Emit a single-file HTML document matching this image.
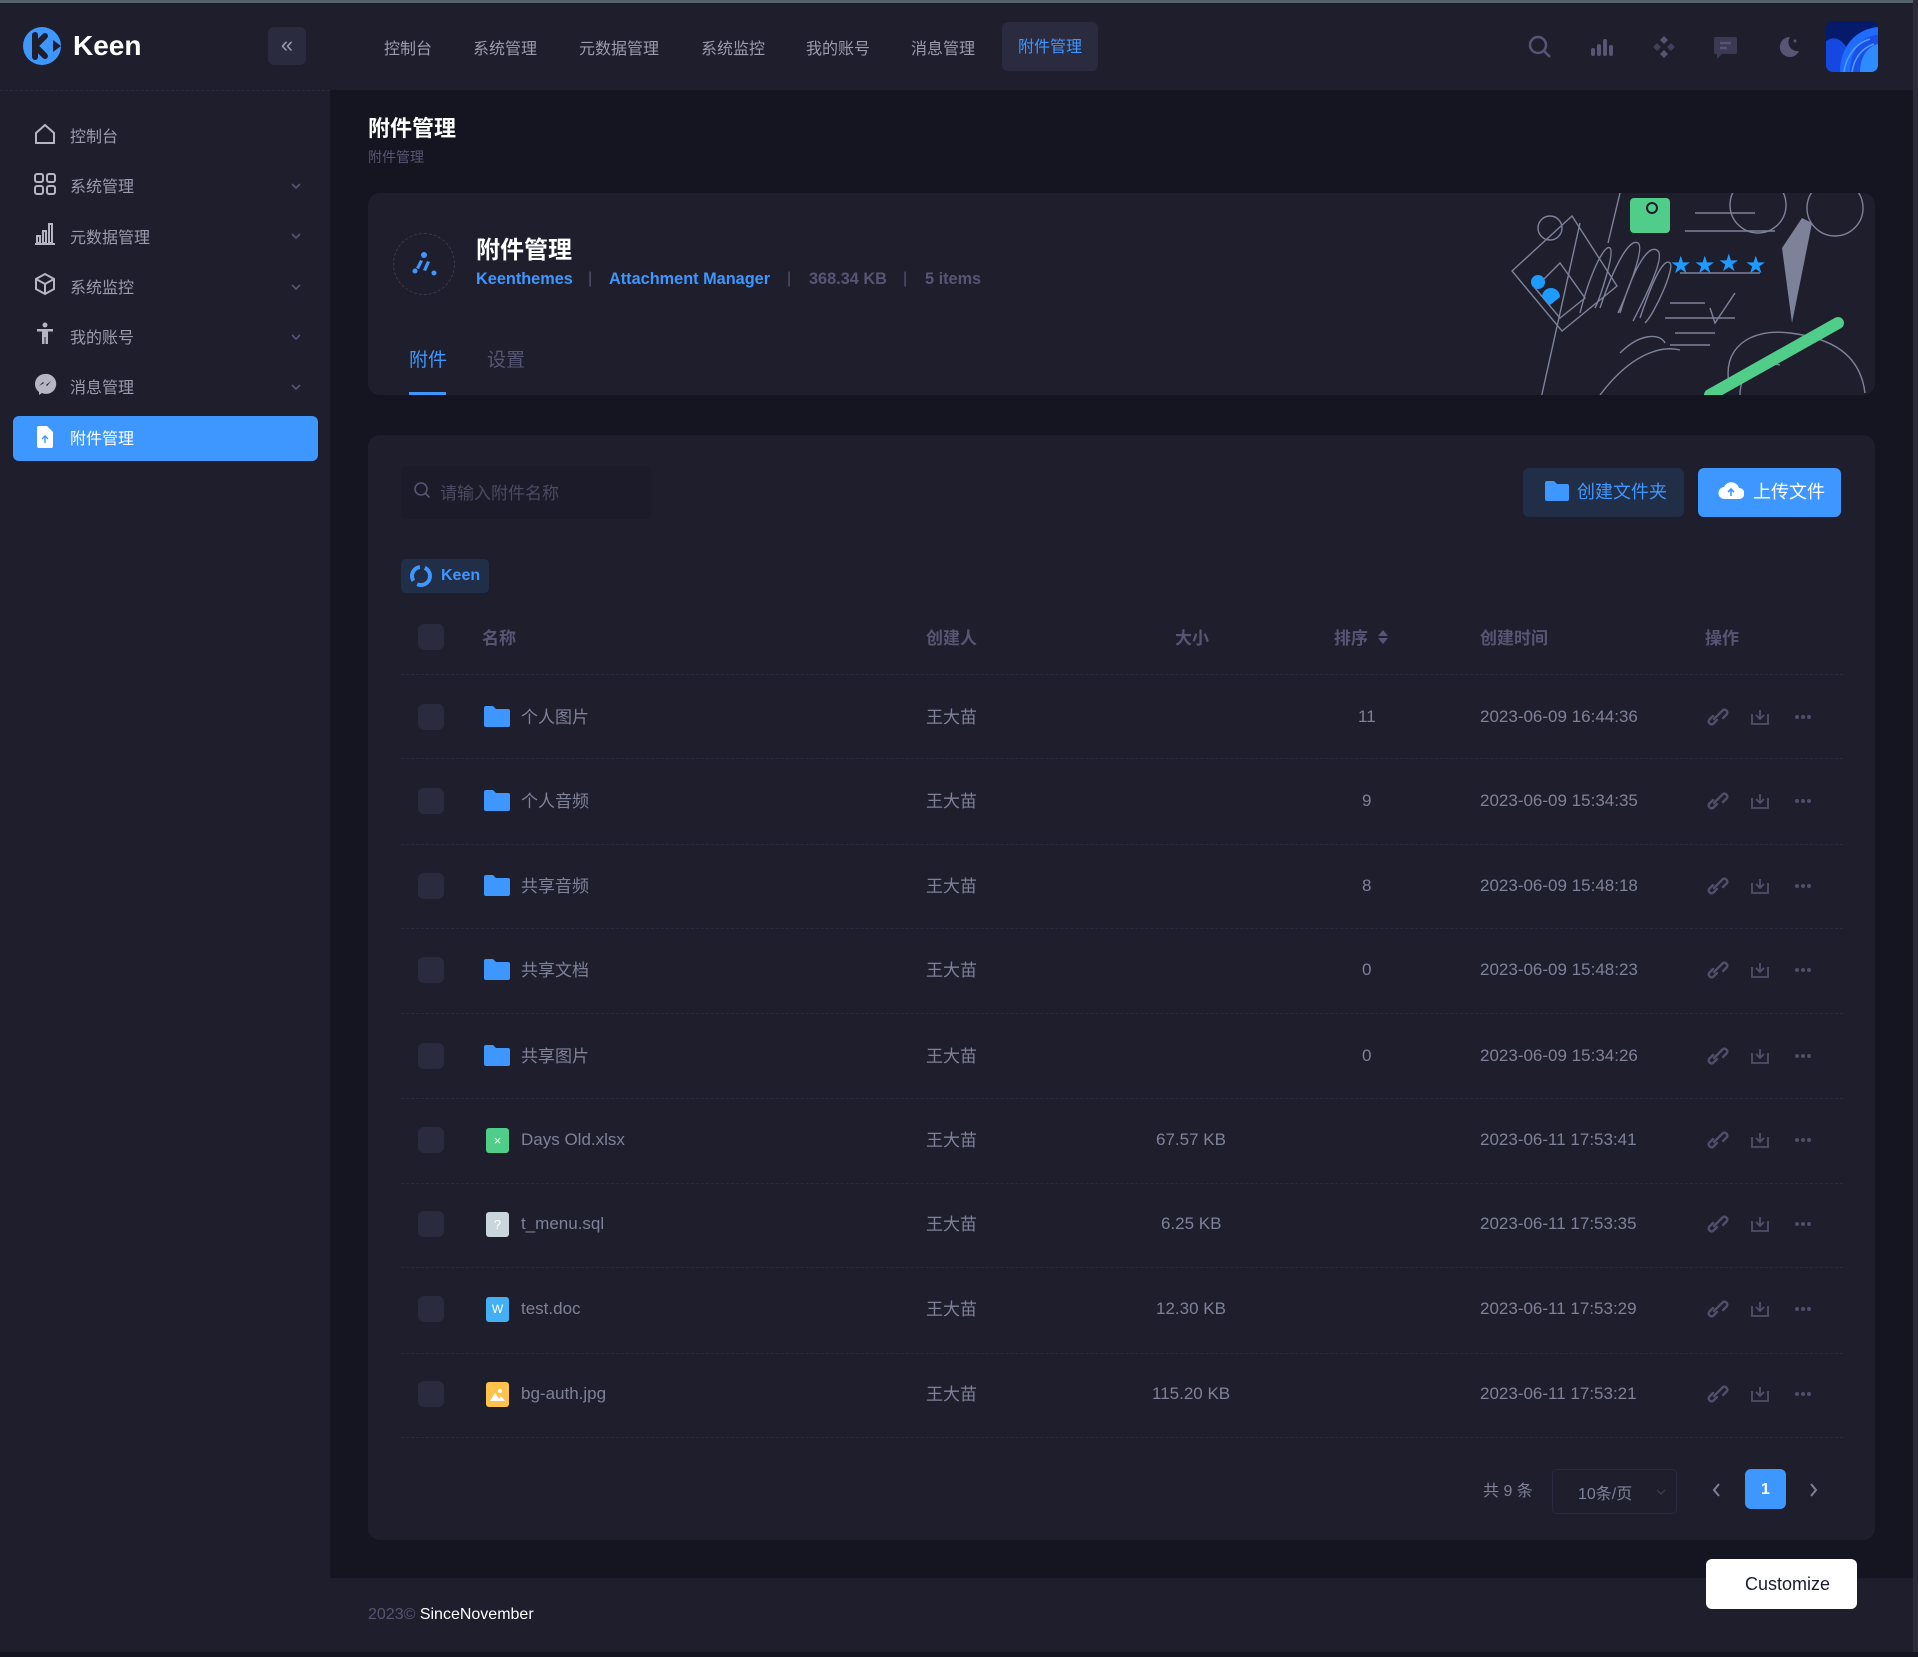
<!DOCTYPE html>
<html><head><meta charset="utf-8">
<style>
*{margin:0;padding:0;box-sizing:border-box}
body{width:1918px;height:1657px;background:#151521;font-family:"Liberation Sans","Noto Sans CJK SC",sans-serif;position:relative;overflow:hidden;color:#92929f}
.a{position:absolute}
.hdr{left:0;top:0;width:1918px;height:90px;background:#1e1e2d;border-top:3px solid #56626b}
.side{left:0;top:90px;width:330px;height:1567px;background:#1e1e2d;border-top:1px dashed #2b2b40}
.nav{top:35px;font-size:16px;color:#9a9cae}
.si{left:70px;font-size:16px;color:#9a9cae;margin-top:-4px}
.ico{left:33px;width:24px;height:24px}
.chev{left:290px;width:12px;height:12px}
.card{background:#1e1e2d;border-radius:12px}
.row{left:401px;width:1442px;height:1px;border-top:1px dashed #2b2b40}
.cb{left:418px;width:26px;height:26px;background:#2b2b40;border-radius:6px}
.t{font-size:17px;color:#7e8299}
.c{margin-top:-3px}
.l{margin-top:1px}
.th{font-size:17px;color:#565674;font-weight:bold;margin-top:-4px}
</style></head><body>
<div class="a hdr"></div>
<svg class="a" style="left:23px;top:27px" width="38" height="38" viewBox="0 0 38 38"><circle cx="19" cy="19" r="19" fill="#3e97ff"/><path d="M12 8v22M12 19l10-10M12 19l10 10" stroke="#1e1e2d" stroke-width="6" stroke-linecap="round"/><path d="M38 19l-8-6v12z" fill="#1e1e2d"/></svg>
<div class="a" style="left:73px;top:30px;font-size:28px;font-weight:bold;color:#fff">Keen</div>
<div class="a" style="left:268px;top:27px;width:38px;height:38px;background:#2b2b40;border-radius:6px;color:#9a9cae;font-size:22px;text-align:center;line-height:36px">«</div>
<div class="a nav" style="left:384px">控制台</div>
<div class="a nav" style="left:473px">系统管理</div>
<div class="a nav" style="left:579px">元数据管理</div>
<div class="a nav" style="left:701px">系统监控</div>
<div class="a nav" style="left:806px">我的账号</div>
<div class="a nav" style="left:911px">消息管理</div>
<div class="a" style="left:1002px;top:22px;width:96px;height:49px;background:#2b2b40;border-radius:6px;color:#3e97ff;font-size:16px;text-align:center;line-height:51px">附件管理</div>
<svg class="a" style="left:1528px;top:35px" width="24" height="24" viewBox="0 0 24 24"><circle cx="10" cy="10" r="8" fill="none" stroke="#565674" stroke-width="2.5"/><path d="M16 16l6 6" stroke="#565674" stroke-width="2.5"/></svg>
<svg class="a" style="left:1590px;top:38px" width="24" height="20" viewBox="0 0 24 20"><rect x="1" y="10" width="4" height="8" rx="2" fill="#565674"/><rect x="7" y="6" width="4" height="12" rx="2" fill="#565674"/><rect x="13" y="1" width="4" height="17" rx="2" fill="#565674"/><rect x="19" y="7" width="4" height="11" rx="2" fill="#565674"/></svg>
<svg class="a" style="left:1652px;top:35px" width="24" height="24" viewBox="0 0 24 24"><g fill="#565674"><path d="M12 1l4 4-4 4-4-4z"/><path d="M12 15l4 4-4 4-4-4z"/><path d="M5 8l4 4-4 4-4-4z" opacity=".6"/><path d="M19 8l4 4-4 4-4-4z" opacity=".6"/></g></svg>
<svg class="a" style="left:1713px;top:36px" width="25" height="24" viewBox="0 0 25 24"><path d="M3 1h19a2 2 0 012 2v13a2 2 0 01-2 2H9l-5 5v-5H3a2 2 0 01-2-2V3a2 2 0 012-2z" fill="#3a3a52"/><path d="M7 7h11M7 12h7" stroke="#565674" stroke-width="2.5"/></svg>
<svg class="a" style="left:1778px;top:36px" width="22" height="22" viewBox="0 0 22 22"><path d="M12 1a10 10 0 109 14A9 9 0 0112 1z" fill="#565674"/><circle cx="17" cy="5" r="1.5" fill="#565674"/></svg>
<svg class="a" style="left:1826px;top:21px;border-radius:7px" width="52" height="51" viewBox="0 0 52 51"><rect width="52" height="51" fill="#061a6b"/><path d="M0 20C15 10 25 30 30 51H0z" fill="#1448e0"/><path d="M14 51C14 25 30 8 52 6v45z" fill="#1f6cff"/><path d="M24 51C24 30 36 14 52 14v37z" fill="#1a4fe8"/><path d="M34 51c0-15 8-26 18-28v28z" fill="#2f8cff"/><path d="M18 51C20 35 30 22 44 18M26 51c2-14 10-24 22-28" stroke="#4aa0ff" stroke-width="1.5" fill="none"/></svg>

<div class="a side"></div>
<svg class="a ico" style="top:122px" viewBox="0 0 24 24"><path d="M3 11L12 3l9 8v10H3z" fill="none" stroke="#b5b5c3" stroke-width="2"/></svg>
<div class="a si" style="top:127px">控制台</div>
<svg class="a ico" style="top:172px" viewBox="0 0 24 24"><g fill="none" stroke="#b5b5c3" stroke-width="2"><rect x="2" y="2" width="8" height="8" rx="2"/><rect x="14" y="2" width="8" height="8" rx="2"/><rect x="2" y="14" width="8" height="8" rx="2"/><rect x="14" y="14" width="8" height="8" rx="2"/></g></svg>
<div class="a si" style="top:177px">系统管理</div>
<svg class="a ico" style="top:222px" viewBox="0 0 24 24"><g fill="none" stroke="#b5b5c3" stroke-width="2"><path d="M2 22h20"/><rect x="4" y="14" width="3" height="7"/><rect x="10" y="9" width="3" height="12"/><rect x="16" y="2" width="3" height="19"/></g></svg>
<div class="a si" style="top:228px">元数据管理</div>
<svg class="a ico" style="top:272px" viewBox="0 0 24 24"><g fill="none" stroke="#b5b5c3" stroke-width="2"><path d="M12 2l9 5v10l-9 5-9-5V7z"/><path d="M3 7l9 5 9-5M12 12v10"/></g></svg>
<div class="a si" style="top:278px">系统监控</div>
<svg class="a ico" style="top:322px" viewBox="0 0 24 24"><g fill="#b5b5c3"><circle cx="12" cy="3" r="2.5"/><path d="M4 7h16v2.5h-5V22h-2.5v-7h-1v7H9V9.5H4z"/></g></svg>
<div class="a si" style="top:328px">我的账号</div>
<svg class="a ico" style="top:372px" viewBox="0 0 24 24"><path d="M12 2a10 10 0 00-6 18v3l3-2a10 10 0 103-19z" fill="#b5b5c3"/><path d="M6 14l4-4 3 3 5-4-4 5-3-3z" fill="#1e1e2d"/></svg>
<div class="a si" style="top:378px">消息管理</div>
<svg class="a chev" style="top:180px" viewBox="0 0 12 12"><path d="M2 4l4 4 4-4" fill="none" stroke="#565674" stroke-width="1.6"/></svg>
<svg class="a chev" style="top:230px" viewBox="0 0 12 12"><path d="M2 4l4 4 4-4" fill="none" stroke="#565674" stroke-width="1.6"/></svg>
<svg class="a chev" style="top:281px" viewBox="0 0 12 12"><path d="M2 4l4 4 4-4" fill="none" stroke="#565674" stroke-width="1.6"/></svg>
<svg class="a chev" style="top:331px" viewBox="0 0 12 12"><path d="M2 4l4 4 4-4" fill="none" stroke="#565674" stroke-width="1.6"/></svg>
<svg class="a chev" style="top:381px" viewBox="0 0 12 12"><path d="M2 4l4 4 4-4" fill="none" stroke="#565674" stroke-width="1.6"/></svg>
<div class="a" style="left:13px;top:416px;width:305px;height:45px;background:#3e97ff;border-radius:6px"></div>
<svg class="a" style="left:37px;top:426px" width="16" height="22" viewBox="0 0 16 22"><path d="M2 0h8l6 6v14a2 2 0 01-2 2H2a2 2 0 01-2-2V2a2 2 0 012-2z" fill="#fff"/><path d="M8 17v-7M5 13l3-3 3 3" fill="none" stroke="#3e97ff" stroke-width="1.4"/></svg>
<div class="a" style="left:70px;top:425px;font-size:16px;color:#fff">附件管理</div>

<div class="a" style="left:368px;top:111px;font-size:22px;font-weight:bold;color:#fff">附件管理</div>
<div class="a" style="left:368px;top:147px;font-size:14px;color:#565674">附件管理</div>

<div class="a card" style="left:368px;top:193px;width:1507px;height:202px"></div>
<div class="a" style="left:393px;top:233px;width:62px;height:62px;border:1.5px dashed #3a3a52;border-radius:50%"></div>
<svg class="a" style="left:410px;top:252px" width="30" height="26" viewBox="0 0 30 26"><g fill="#3e97ff"><circle cx="14" cy="3" r="3"/><circle cx="5" cy="19" r="2.5"/><circle cx="24" cy="21" r="2.5"/><path d="M10 8l3 1-4 8-3-1z"/><path d="M17 9l3 1-4 9-3-1z"/></g></svg>
<div class="a" style="left:476px;top:230px;font-size:24px;font-weight:bold;color:#fff">附件管理</div>
<div class="a" style="left:476px;top:270px;font-size:16.3px;font-weight:bold;color:#3e97ff">Keenthemes</div>
<div class="a" style="left:588px;top:270px;font-size:16px;color:#565674">|</div>
<div class="a" style="left:609px;top:270px;font-size:16.3px;font-weight:bold;color:#3e97ff">Attachment Manager</div>
<div class="a" style="left:787px;top:270px;font-size:16px;color:#565674">|</div>
<div class="a" style="left:809px;top:270px;font-size:16.3px;font-weight:bold;color:#565674">368.34 KB</div>
<div class="a" style="left:903px;top:270px;font-size:16px;color:#565674">|</div>
<div class="a" style="left:925px;top:270px;font-size:16.3px;font-weight:bold;color:#565674">5 items</div>
<div class="a" style="left:409px;top:345px;font-size:19px;color:#3e97ff">附件</div>
<div class="a" style="left:487px;top:345px;font-size:19px;color:#565674">设置</div>
<div class="a" style="left:409px;top:392px;width:37px;height:3px;background:#3e97ff"></div>
<svg class="a" style="left:1500px;top:193px" width="375" height="202" viewBox="0 0 375 202" fill="none" stroke="#7e8299" stroke-width="1.4">
<path d="M12 78l60-55 45 70-55 45z"/><circle cx="50" cy="35" r="12"/><path d="M35 95l25-25 25 35-25 20z"/>
<path d="M40 210l40-180M120 0l-12 50"/>
<path d="M80 120c10-40 25-70 30-65s-10 50-15 60M100 115c15-45 30-70 38-65s-15 60-20 70M120 120c15-50 30-70 38-62s-20 60-25 70M140 125c15-45 25-60 30-55s-15 50-25 60"/>
<path d="M120 160c20-20 40-20 45-10M100 202c30-40 60-50 80-45"/>
<path d="M195 20h60M185 38h90M180 80h80M170 110h35M165 125h70M175 140h40M170 152h40M235 100l-20 30-5-15"/>
<circle cx="258" cy="12" r="28"/><circle cx="335" cy="15" r="28"/>
<path d="M230 195c-10-40 20-60 60-55s70 20 75 60"/><path d="M240 202c0-25 20-35 40-30"/>
<rect x="130" y="5" width="40" height="35" fill="#50cd89" stroke="none" rx="4"/><circle cx="152" cy="15" r="6" fill="#1e1e2d" stroke="none"/><circle cx="152" cy="15" r="4" fill="#50cd89" stroke="none"/>
<path d="M282 55l20-30 10 5-20 100" fill="#7e8299" stroke="none"/>
<path d="M210 202l128-72" stroke="#50cd89" stroke-width="12" stroke-linecap="round"/>
<circle cx="38" cy="89" r="7" fill="#1e9bff" stroke="none"/><path d="M42 104a9 9 0 0118 0l-10 8z" fill="#1e9bff" stroke="none"/>
<g fill="#1e9bff" stroke="none" font-size="24" font-family="DejaVu Sans"><text x="170" y="80">★</text><text x="194" y="80">★</text><text x="218" y="78">★</text><text x="245" y="80">★</text></g>
</svg>

<div class="a card" style="left:368px;top:435px;width:1507px;height:1105px"></div>
<div class="a" style="left:401px;top:466px;width:250px;height:53px;background:#1b1b29;border-radius:6px"></div>
<svg class="a" style="left:413px;top:481px" width="18" height="18" viewBox="0 0 18 18"><circle cx="8" cy="8" r="6" fill="none" stroke="#565674" stroke-width="1.6"/><path d="M12.5 12.5l4 4" stroke="#565674" stroke-width="1.6"/></svg>
<div class="a" style="left:440px;top:479px;font-size:17px;color:#4b4b63">请输入附件名称</div>
<div class="a" style="left:1523px;top:468px;width:161px;height:49px;background:#212e48;border-radius:6px"></div>
<svg class="a" style="left:1545px;top:480px" width="24" height="21" viewBox="0 0 24 21"><path d="M0 3a2 2 0 012-2h7l3 3h10a2 2 0 012 2v13a2 2 0 01-2 2H2a2 2 0 01-2-2z" fill="#3e97ff"/></svg>
<div class="a" style="left:1577px;top:478px;font-size:18px;color:#3e97ff">创建文件夹</div>
<div class="a" style="left:1698px;top:468px;width:143px;height:49px;background:#3e97ff;border-radius:6px"></div>
<svg class="a" style="left:1718px;top:480px" width="26" height="20" viewBox="0 0 26 20"><path d="M7 19a6 6 0 01-1-12 8 8 0 0115 1 5.5 5.5 0 010 11z" fill="#fff"/><path d="M13 16V9M10 12l3-3 3 3" stroke="#3e97ff" stroke-width="1.6" fill="none"/></svg>
<div class="a" style="left:1753px;top:478px;font-size:18px;color:#fff">上传文件</div>
<div class="a" style="left:401px;top:559px;width:88px;height:34px;background:#212e48;border-radius:5px"></div>
<svg class="a" style="left:410px;top:565px" width="22" height="22" viewBox="0 0 22 22"><circle cx="11" cy="11" r="9" fill="none" stroke="#3e97ff" stroke-width="4" stroke-dasharray="18 5"/></svg>
<div class="a" style="left:441px;top:567px;font-size:16px;font-weight:bold;color:#3e97ff">Keen</div>

<div class="a cb" style="top:624px"></div>
<div class="a th" style="left:482px;top:628px">名称</div>
<div class="a th" style="left:926px;top:628px">创建人</div>
<div class="a th" style="left:1175px;top:628px">大小</div>
<div class="a th" style="left:1334px;top:628px">排序</div>
<svg class="a" style="left:1377px;top:629px" width="12" height="16" viewBox="0 0 12 16"><path d="M6 1l5 6H1zM6 15l5-6H1z" fill="#565674"/></svg>
<div class="a th" style="left:1480px;top:628px">创建时间</div>
<div class="a th" style="left:1705px;top:628px">操作</div>
<div class="a row" style="top:674px"></div>
<div class="a row" style="top:758px"></div>
<div class="a row" style="top:844px"></div>
<div class="a row" style="top:928px"></div>
<div class="a row" style="top:1013px"></div>
<div class="a row" style="top:1098px"></div>
<div class="a row" style="top:1183px"></div>
<div class="a row" style="top:1267px"></div>
<div class="a row" style="top:1353px"></div>
<div class="a row" style="top:1437px"></div>

<div class="a cb" style="top:704px"></div><svg class="a" style="left:484px;top:705px" width="26" height="22" viewBox="0 0 26 22"><path d="M0 3a2 2 0 012-2h7l3 3h12a2 2 0 012 2v14a2 2 0 01-2 2H2a2 2 0 01-2-2z" fill="#3e97ff"/></svg><div class="a t c" style="left:521px;top:706px">个人图片</div><div class="a t c" style="left:926px;top:706px">王大苗</div><div class="a t l" style="left:1358px;top:706px">11</div><div class="a t l" style="left:1480px;top:706px">2023-06-09 16:44:36</div>
<div class="a cb" style="top:788px"></div><svg class="a" style="left:484px;top:789px" width="26" height="22" viewBox="0 0 26 22"><path d="M0 3a2 2 0 012-2h7l3 3h12a2 2 0 012 2v14a2 2 0 01-2 2H2a2 2 0 01-2-2z" fill="#3e97ff"/></svg><div class="a t c" style="left:521px;top:790px">个人音频</div><div class="a t c" style="left:926px;top:790px">王大苗</div><div class="a t l" style="left:1362px;top:790px">9</div><div class="a t l" style="left:1480px;top:790px">2023-06-09 15:34:35</div>
<div class="a cb" style="top:873px"></div><svg class="a" style="left:484px;top:874px" width="26" height="22" viewBox="0 0 26 22"><path d="M0 3a2 2 0 012-2h7l3 3h12a2 2 0 012 2v14a2 2 0 01-2 2H2a2 2 0 01-2-2z" fill="#3e97ff"/></svg><div class="a t c" style="left:521px;top:875px">共享音频</div><div class="a t c" style="left:926px;top:875px">王大苗</div><div class="a t l" style="left:1362px;top:875px">8</div><div class="a t l" style="left:1480px;top:875px">2023-06-09 15:48:18</div>
<div class="a cb" style="top:957px"></div><svg class="a" style="left:484px;top:958px" width="26" height="22" viewBox="0 0 26 22"><path d="M0 3a2 2 0 012-2h7l3 3h12a2 2 0 012 2v14a2 2 0 01-2 2H2a2 2 0 01-2-2z" fill="#3e97ff"/></svg><div class="a t c" style="left:521px;top:959px">共享文档</div><div class="a t c" style="left:926px;top:959px">王大苗</div><div class="a t l" style="left:1362px;top:959px">0</div><div class="a t l" style="left:1480px;top:959px">2023-06-09 15:48:23</div>
<div class="a cb" style="top:1043px"></div><svg class="a" style="left:484px;top:1044px" width="26" height="22" viewBox="0 0 26 22"><path d="M0 3a2 2 0 012-2h7l3 3h12a2 2 0 012 2v14a2 2 0 01-2 2H2a2 2 0 01-2-2z" fill="#3e97ff"/></svg><div class="a t c" style="left:521px;top:1045px">共享图片</div><div class="a t c" style="left:926px;top:1045px">王大苗</div><div class="a t l" style="left:1362px;top:1045px">0</div><div class="a t l" style="left:1480px;top:1045px">2023-06-09 15:34:26</div>
<div class="a cb" style="top:1127px"></div><div class="a" style="left:486px;top:1128px;width:23px;height:25px;background:#50cd89;border-radius:3px;color:#fff;font-size:13px;text-align:center;line-height:25px">×</div><div class="a t l" style="left:521px;top:1129px">Days Old.xlsx</div><div class="a t c" style="left:926px;top:1129px">王大苗</div><div class="a t l" style="left:1156px;top:1129px">67.57 KB</div><div class="a t l" style="left:1480px;top:1129px">2023-06-11 17:53:41</div>
<div class="a cb" style="top:1211px"></div><div class="a" style="left:486px;top:1212px;width:23px;height:25px;background:#c9d6dc;border-radius:3px;color:#fff;font-size:13px;text-align:center;line-height:25px">?</div><div class="a t l" style="left:521px;top:1213px">t_menu.sql</div><div class="a t c" style="left:926px;top:1213px">王大苗</div><div class="a t l" style="left:1161px;top:1213px">6.25 KB</div><div class="a t l" style="left:1480px;top:1213px">2023-06-11 17:53:35</div>
<div class="a cb" style="top:1296px"></div><div class="a" style="left:486px;top:1297px;width:23px;height:25px;background:#43b0f5;border-radius:3px;color:#fff;font-size:12px;text-align:center;line-height:25px">W</div><div class="a t l" style="left:521px;top:1298px">test.doc</div><div class="a t c" style="left:926px;top:1298px">王大苗</div><div class="a t l" style="left:1156px;top:1298px">12.30 KB</div><div class="a t l" style="left:1480px;top:1298px">2023-06-11 17:53:29</div>
<div class="a cb" style="top:1381px"></div><div class="a" style="left:486px;top:1382px;width:23px;height:25px;background:#ffc34d;border-radius:3px"></div><svg class="a" style="left:489px;top:1388px" width="17" height="14" viewBox="0 0 17 14"><circle cx="11" cy="3" r="2" fill="#fff"/><path d="M1 13l5-8 4 6 2-3 4 5z" fill="#fff"/></svg><div class="a t l" style="left:521px;top:1383px">bg-auth.jpg</div><div class="a t c" style="left:926px;top:1383px">王大苗</div><div class="a t l" style="left:1152px;top:1383px">115.20 KB</div><div class="a t l" style="left:1480px;top:1383px">2023-06-11 17:53:21</div>

<svg class="a" style="left:1700px;top:0" width="130" height="1420" viewBox="0 0 130 1420">
<defs><g id="ac"><path d="M19 8l4-4a3 3 0 014 4l-4 4M17 14l-4 4a3 3 0 01-4-4l4-4M14 13l6-6" fill="none" stroke="#4f4f6a" stroke-width="2.4" stroke-linecap="round"/><path d="M60 4v8M56 9l4 4 4-4M52 8v10h16V8" fill="none" stroke="#4f4f6a" stroke-width="1.8"/><circle cx="97" cy="11" r="2" fill="#4f4f6a"/><circle cx="103" cy="11" r="2" fill="#4f4f6a"/><circle cx="109" cy="11" r="2" fill="#4f4f6a"/></g></defs>
<use href="#ac" y="706"/><use href="#ac" y="790"/><use href="#ac" y="875"/><use href="#ac" y="959"/><use href="#ac" y="1045"/><use href="#ac" y="1129"/><use href="#ac" y="1213"/><use href="#ac" y="1298"/><use href="#ac" y="1383"/>
</svg>

<div class="a" style="left:1483px;top:1477px;font-size:16px;color:#7e8299">共 9 条</div>
<div class="a" style="left:1552px;top:1469px;width:125px;height:45px;border:1px solid #2b2b40;border-radius:5px"></div>
<div class="a" style="left:1578px;top:1480px;font-size:16px;color:#7e8299">10条/页</div>
<svg class="a" style="left:1655px;top:1487px" width="12" height="10" viewBox="0 0 12 10"><path d="M2 3l4 4 4-4" fill="none" stroke="#3f4254" stroke-width="1.2"/></svg>
<svg class="a" style="left:1711px;top:1482px" width="10" height="16" viewBox="0 0 10 16"><path d="M8 2L3 8l5 6" fill="none" stroke="#7e8299" stroke-width="2"/></svg>
<div class="a" style="left:1745px;top:1469px;width:41px;height:40px;background:#3e97ff;border-radius:6px;color:#fff;font-size:16px;font-weight:bold;text-align:center;line-height:42px">1</div>
<svg class="a" style="left:1809px;top:1482px" width="10" height="16" viewBox="0 0 10 16"><path d="M2 2l5 6-5 6" fill="none" stroke="#7e8299" stroke-width="2"/></svg>

<div class="a" style="left:330px;top:1578px;width:1583px;height:74px;background:#1e1e2d"></div>
<div class="a" style="left:368px;top:1606px;font-size:16px;color:#565674">2023© <span style="color:#fff">SinceNovember</span></div>
<div class="a" style="left:1706px;top:1559px;width:151px;height:50px;background:#fff;border-radius:6px;color:#181c32;font-size:18px;text-align:center;line-height:50px;padding-left:12px">Customize</div>
<div class="a" style="left:1913px;top:0;width:5px;height:1657px;background:#2b2b3a"></div>
<div class="a" style="left:0;top:1652px;width:1918px;height:5px;background:#151521"></div>
</body></html>
